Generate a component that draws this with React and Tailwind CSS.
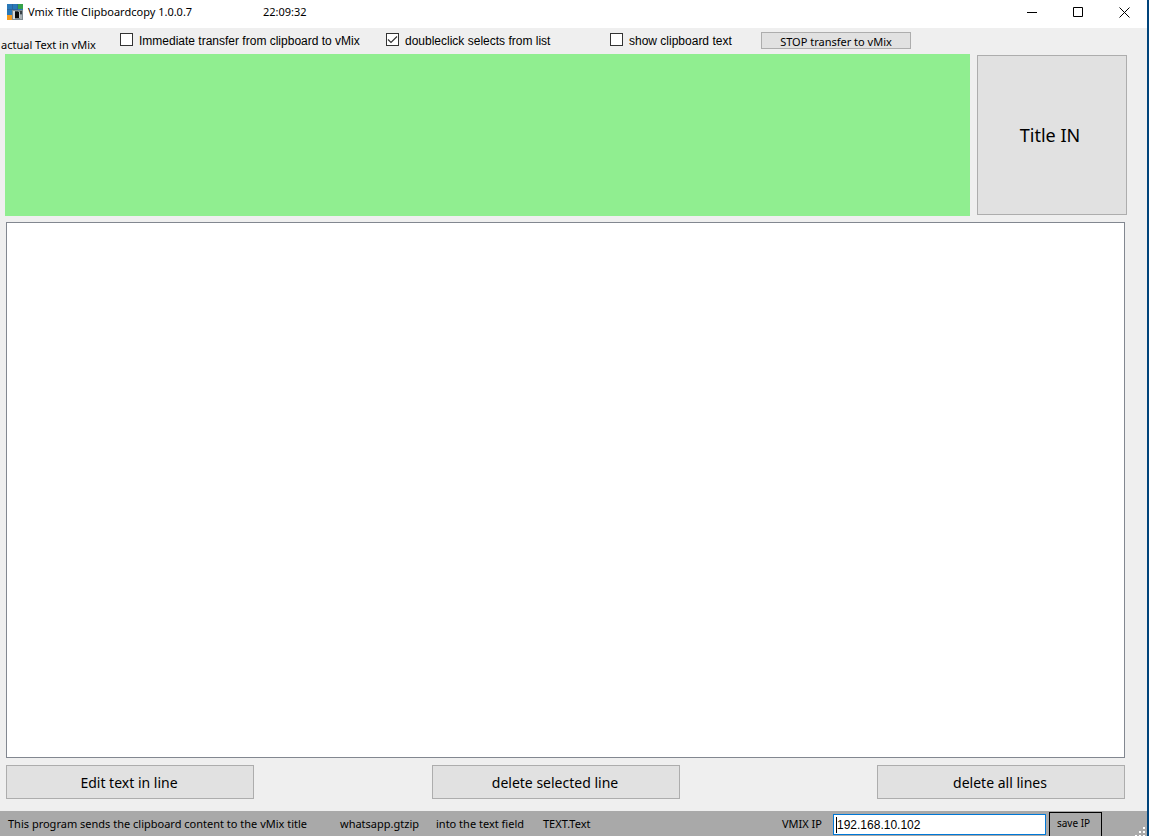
import { useState } from "react";

const buttonClass = "border border-[#adadad] bg-[#e1e1e1] text-black hover:border-[#0078d7] hover:bg-[#e5f1fb]";

function AppIcon() {
  return (
    <svg width="16" height="16" viewBox="0 0 16 16" shapeRendering="crispEdges" aria-hidden="true">
      <rect width="16" height="16" fill="#2a79b8" />
      <rect x="11" width="5" height="5" fill="#36a24a" />
      <rect y="11" width="5" height="5" fill="#f59a1b" />
      <path d="M5 0h1v11h-1zM0 5h11v1h-11zM10 0h1v5h-1z" fill="#2c659c" />
      <rect x="5" y="6" width="11" height="10" fill="#7f8b91" />
      <rect x="6" y="7" width="2" height="8" fill="#d5dadb" />
      <rect x="8" y="8" width="4" height="6" fill="#0a0a0a" />
      <rect x="8" y="7" width="3" height="1" fill="#3a4145" />
      <rect x="12" y="8" width="1" height="6" fill="#c3c9ca" />
      <rect x="13" y="7" width="2" height="3" fill="#3a4145" />
      <rect x="13" y="11" width="2" height="4" fill="#a9b1b4" />
    </svg>
  );
}

function CaptionButton({ label, children }) {
  return (
    <button type="button" aria-label={label} className="grid h-6 w-[46px] place-items-center hover:bg-[#e5e5e5]">
      <svg width="11" height="11" viewBox="0 0 11 11" fill="none" stroke="#000" aria-hidden="true">
        {children}
      </svg>
    </button>
  );
}

function CheckField({ id, label, checked, onChange, className }) {
  return (
    <div className={`flex items-start gap-1.5 pt-px ${className}`}>
      <span className="relative size-[13px] shrink-0">
        <input
          id={id}
          type="checkbox"
          checked={checked}
          onChange={(event) => onChange(event.target.checked)}
          className="block size-[13px] appearance-none border border-[#333] bg-white"
        />
        {checked && (
          <svg
            className="pointer-events-none absolute inset-0"
            width="13"
            height="13"
            viewBox="0 0 13 13"
            fill="none"
            stroke="#333"
            strokeWidth="1.2"
            aria-hidden="true"
          >
            <path d="M2 6.5L5 9.5L11 3.5" />
          </svg>
        )}
      </span>
      <label htmlFor={id} className="whitespace-nowrap font-['Liberation_Sans',sans-serif] text-[12px] leading-4">
        {label}
      </label>
    </div>
  );
}

export default function App() {
  const [immediate, setImmediate] = useState(false);
  const [doubleClick, setDoubleClick] = useState(true);
  const [showClipboard, setShowClipboard] = useState(false);
  const [ip, setIp] = useState("192.168.10.102");

  return (
    <div className="flex h-screen flex-col overflow-hidden border-r-2 border-[#00437a] bg-[#efefef] font-['Noto_Sans',sans-serif] text-black">
      <header className="flex h-7 shrink-0 items-start bg-white">
        <div className="flex h-6 flex-1 items-center pl-[7px] text-[11px]">
          <AppIcon />
          <h1 className="w-[235px] whitespace-nowrap pl-[5px]">Vmix Title Clipboardcopy 1.0.0.7</h1>
          <time className="pl-[5px]">22:09:32</time>
        </div>
        <CaptionButton label="Minimize">
          <path d="M0 5.5H10" />
        </CaptionButton>
        <CaptionButton label="Maximize">
          <path d="M0.5 0.5H9.5V9.5H0.5Z" />
        </CaptionButton>
        <CaptionButton label="Close">
          <path d="M0.5 0.5L10.5 10.5M10.5 0.5L0.5 10.5" />
        </CaptionButton>
      </header>

      <div className="flex h-[26px] shrink-0 items-start pt-1">
        <span className="w-[120px] self-end whitespace-nowrap pl-px text-[11px] leading-[18px]">actual Text in vMix</span>
        <CheckField
          id="immediate"
          label="Immediate transfer from clipboard to vMix"
          checked={immediate}
          onChange={setImmediate}
          className="w-[266px]"
        />
        <CheckField
          id="doubleclick"
          label="doubleclick selects from list"
          checked={doubleClick}
          onChange={setDoubleClick}
          className="w-[224px]"
        />
        <CheckField
          id="clipboard"
          label="show clipboard text"
          checked={showClipboard}
          onChange={setShowClipboard}
          className="w-[151px]"
        />
        <button type="button" className={`h-[17px] w-[150px] pt-px text-[11px] leading-4 ${buttonClass}`}>
          STOP transfer to vMix
        </button>
      </div>

      <main className="flex min-h-0 flex-1 flex-col pl-1.5 pr-[22px]">
        <section className="-ml-px -mr-0.5 flex h-[162px] shrink-0 items-center gap-[7px]">
          <output aria-label="actual Text in vMix" className="h-full flex-1 bg-[#90ee90]" />
          <button type="button" className={`h-40 w-[150px] pr-1 text-[18px] ${buttonClass}`}>
            Title IN
          </button>
        </section>

        <ul aria-label="Lines" className="mt-1.5 min-h-0 flex-1 border border-[#828790] bg-white" />

        <div className="mb-3 mt-[7px] flex h-[34px] shrink-0 justify-between text-[14px]">
          <button type="button" className={`w-[248px] pr-0.5 ${buttonClass}`}>
            Edit text in line
          </button>
          <button type="button" className={`mr-[19px] w-[248px] pr-0.5 ${buttonClass}`}>
            delete selected line
          </button>
          <button type="button" className={`w-[248px] pr-0.5 ${buttonClass}`}>
            delete all lines
          </button>
        </div>
      </main>

      <footer className="flex h-[25px] shrink-0 items-center overflow-hidden bg-[#a9a9a9] pt-0.5 text-[11px]">
        <p className="flex flex-1 whitespace-nowrap pl-2">
          <span className="w-[332px]">This program sends the clipboard content to the vMix title</span>
          <span className="w-24">whatsapp.gtzip</span>
          <span className="w-[107px]">into the text field</span>
          <span>TEXT.Text</span>
        </p>
        <label htmlFor="ip" className="pr-[11px]">
          VMIX IP
        </label>
        <div className="flex h-[21px] w-[213px] items-center bg-white pl-[3px] pr-px ring-1 ring-inset ring-[#0078d7]">
          <span className="h-4 w-px bg-black" />
          <input
            id="ip"
            value={ip}
            onChange={(event) => setIp(event.target.value)}
            className="w-full min-w-0 bg-transparent font-['Liberation_Sans',sans-serif] text-[12px] outline-none"
          />
        </div>
        <button
          type="button"
          className="-mt-px ml-[3px] h-[27px] w-[53px] shrink-0 self-start border border-black pb-1 pr-1 text-[10px]"
        >
          save IP
        </button>
        <div className="flex w-[45px] justify-end self-end">
          <svg width="12" height="12" viewBox="0 0 12 12" fill="#fff" shapeRendering="crispEdges" aria-hidden="true">
            <path d="M8 3h2v2h-2zM4 7h2v2h-2zM8 7h2v2h-2zM0 11h2v1h-2zM4 11h2v1h-2zM8 11h2v1h-2z" />
          </svg>
        </div>
      </footer>
    </div>
  );
}
